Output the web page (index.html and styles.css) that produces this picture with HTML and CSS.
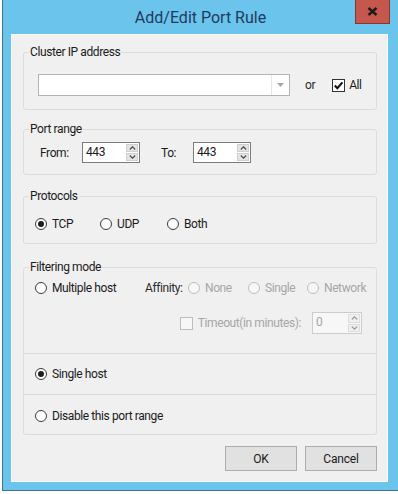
FILE: index.html
```html
<!DOCTYPE html>
<html lang="en">
<head>
<meta charset="utf-8">
<title>Add/Edit Port Rule</title>
<link rel="stylesheet" href="styles.css">
</head>
<body>
<div class="window">
  <div class="titlebar">
    <h1 class="title">Add/Edit Port Rule</h1>
    <button class="close" aria-label="Close">
      <svg width="11" height="9" viewBox="0 0 11 9"><path d="M1.5 1 L9.5 8 M9.5 1 L1.5 8" stroke="#1c1c1c" stroke-width="2.4" fill="none"/></svg>
    </button>
  </div>
  <div class="client">
    <fieldset class="group">
      <legend>Cluster IP address</legend>
      <div class="gbody cluster">
        <div class="combo">
          <span class="combo-btn"><svg width="7" height="4" viewBox="0 0 7 4"><path d="M0 0H7L3.5 4Z" fill="#a9a9a9"/></svg></span>
        </div>
        <span class="or">or</span>
        <label class="check">
          <span class="box"><svg width="11" height="11" viewBox="0 0 11 11"><path d="M1.8 5.6 L4.3 8.2 L9.4 2.4" stroke="#111" stroke-width="2.1" fill="none"/></svg></span>
          All
        </label>
      </div>
    </fieldset>

    <fieldset class="group">
      <legend>Port range</legend>
      <div class="gbody ports">
        <span class="plabel from">From:</span>
        <div class="spin">
          <span class="spin-val">443</span>
          <span class="spin-btns">
            <span class="sbtn"><svg width="7" height="4" viewBox="0 0 7 4"><path d="M0.8 3.5 L3.5 0.8 L6.2 3.5" stroke="#4a4a4a" stroke-width="1.1" fill="none"/></svg></span>
            <span class="sbtn"><svg width="7" height="4" viewBox="0 0 7 4"><path d="M0.8 0.5 L3.5 3.2 L6.2 0.5" stroke="#4a4a4a" stroke-width="1.1" fill="none"/></svg></span>
          </span>
        </div>
        <span class="plabel to">To:</span>
        <div class="spin">
          <span class="spin-val">443</span>
          <span class="spin-btns">
            <span class="sbtn"><svg width="7" height="4" viewBox="0 0 7 4"><path d="M0.8 3.5 L3.5 0.8 L6.2 3.5" stroke="#4a4a4a" stroke-width="1.1" fill="none"/></svg></span>
            <span class="sbtn"><svg width="7" height="4" viewBox="0 0 7 4"><path d="M0.8 0.5 L3.5 3.2 L6.2 0.5" stroke="#4a4a4a" stroke-width="1.1" fill="none"/></svg></span>
          </span>
        </div>
      </div>
    </fieldset>

    <fieldset class="group proto-group">
      <legend>Protocols</legend>
      <div class="gbody protocols">
        <label class="radio on"><span class="dot"></span>TCP</label>
        <label class="radio"><span class="dot"></span>UDP</label>
        <label class="radio"><span class="dot"></span>Both</label>
      </div>
    </fieldset>

    <div class="filter-block">
      <fieldset class="group filter">
        <legend>Filtering mode</legend>
        <div class="gbody filtering">
          <div class="frow">
            <label class="radio"><span class="dot"></span>Multiple host</label>
            <span class="affinity">Affinity:</span>
            <label class="radio dis"><span class="dot"></span>None</label>
            <label class="radio dis"><span class="dot"></span>Single</label>
            <label class="radio dis"><span class="dot"></span>Network</label>
          </div>
          <div class="trow">
            <label class="check dis"><span class="box"></span>Timeout(in minutes):</label>
            <div class="spin small dis">
              <span class="spin-val">0</span>
              <span class="spin-btns">
                <span class="sbtn"><svg width="7" height="4" viewBox="0 0 7 4"><path d="M0.8 3.5 L3.5 0.8 L6.2 3.5" stroke="#9a9a9a" stroke-width="1.1" fill="none"/></svg></span>
                <span class="sbtn"><svg width="7" height="4" viewBox="0 0 7 4"><path d="M0.8 0.5 L3.5 3.2 L6.2 0.5" stroke="#9a9a9a" stroke-width="1.1" fill="none"/></svg></span>
              </span>
            </div>
          </div>
        </div>
      </fieldset>
      <div class="subbox single">
        <label class="radio on"><span class="dot"></span>Single host</label>
      </div>
      <div class="subbox last">
        <label class="radio"><span class="dot"></span>Disable this port range</label>
      </div>
    </div>

    <div class="buttons">
      <button class="btn">OK</button>
      <button class="btn">Cancel</button>
    </div>
  </div>
</div>
</body>
</html>
```

FILE: styles.css
```css
* { box-sizing: border-box; }

body {
  margin: 0;
  background: #ffffff;
  font-family: Roboto, "Liberation Sans", Arial, sans-serif;
  font-size: 12px;
  letter-spacing: -0.4px;
  color: #1b1b1b;
}

.window {
  margin-left: 2px;
  width: 396px;
  height: 491px;
  background: #6bc4ec;
  border-left: 1px solid #3d7594;
  border-bottom: 1px solid #3d7594;
  display: flex;
  flex-direction: column;
}

.titlebar {
  height: 34px;
  display: grid;
  grid-template-columns: 1fr auto 1fr;
  align-items: start;
}

.title {
  grid-column: 2;
  margin: 0;
  font-size: 16px;
  font-weight: normal;
  letter-spacing: 0;
  line-height: 35px;
  color: #1e3b60;
}

.close {
  grid-column: 3;
  justify-self: end;
  margin: 0 8px 0 0;
  width: 35px;
  height: 24px;
  padding: 0;
  background: #c6574d;
  border: 1px solid #7c3a33;
  border-top: none;
  display: grid;
  place-items: center;
}

.client {
  margin: 0 10px 0 8px;
  height: 448px;
  background: #f0f0f0;
  border: 1px solid #fafafa;
  padding: 10px 10px 0 11px;
  display: flex;
  flex-direction: column;
}

.group {
  margin: 0;
  min-width: 0;
  border: 1px solid #dcdcdc;
  border-radius: 3px;
  padding: 0 0 0 5px;
}

.group + .group { margin-top: 12px; }
.group.proto-group { margin-top: 14px; }
.group + .filter-block { margin-top: 16px; }

.group legend {
  padding: 0 1px;
  line-height: 14px;
  font-size: 12px;
}

.gbody { display: flex; align-items: center; }

/* Cluster IP */
.cluster { padding: 15px 0 13px 9px; }

.combo {
  width: 252px;
  height: 22px;
  border: 1px solid #b3b3b3;
  background: #ffffff;
  display: flex;
  justify-content: flex-end;
}

.combo-btn {
  width: 18px;
  border-left: 1px solid #e6e6e6;
  display: grid;
  place-items: center;
}

.or { margin-left: 15px; color: #2a2a2a; }

.check {
  display: inline-flex;
  align-items: center;
  gap: 4px;
}

.cluster .check { margin-left: 17px; }

.box {
  width: 13px;
  height: 13px;
  border: 1px solid #333333;
  background: #ffffff;
  display: grid;
  place-items: center;
}

.check.dis { color: #a6a6a6; gap: 5px; }
.check.dis .box { border-color: #bdbdbd; background: #f7f7f7; }

/* Port range */
.ports { padding: 6px 0 11px 11px; }

.plabel { display: inline-block; }
.from { width: 42px; }
.to { width: 32px; margin-left: 21px; }

.spin {
  width: 58px;
  height: 21px;
  border: 1px solid #7c7c7c;
  background: #ffffff;
  display: flex;
}

.spin-val {
  flex: 1;
  padding-left: 3px;
  line-height: 19px;
}

.spin-btns {
  width: 13px;
  display: flex;
  flex-direction: column;
  padding: 1px 1px 1px 0;
  gap: 1px;
}

.sbtn {
  flex: 1;
  background: #e4e4e4;
  border: 1px solid #cfcfcf;
  display: grid;
  place-items: center;
}

.spin.small { width: 50px; height: 22px; }
.spin.dis { border-color: #cccccc; color: #a6a6a6; background: #f7f7f7; }
.spin.dis .sbtn { background: #f0f0f0; border-color: #dddddd; }

/* Radios */
.radio {
  display: inline-flex;
  align-items: center;
  gap: 5px;
  line-height: 16px;
}

.dot {
  width: 12px;
  height: 12px;
  border-radius: 50%;
  border: 1px solid #3a3a3a;
  background: #ffffff;
  display: grid;
  place-items: center;
}

.radio.on .dot::after {
  content: "";
  width: 6px;
  height: 6px;
  border-radius: 50%;
  background: #1e1e1e;
}

.radio.dis { color: #a6a6a6; }
.radio.dis .dot { border-color: #bdbdbd; background: #f7f7f7; }

.protocols {
  display: grid;
  grid-template-columns: 65px 67px auto;
  padding: 13px 0 11px 6px;
}

/* Filtering */
.filter-block { display: flex; flex-direction: column; }

.filter { border-radius: 3px 3px 0 0; }

.filtering {
  flex-direction: column;
  align-items: stretch;
  gap: 16px;
  padding: 6px 14px 19px 6px;
}

.frow {
  display: grid;
  grid-template-columns: 110px 43px 60px 59px auto;
  align-items: center;
}

.affinity { color: #2a2a2a; }

.trow {
  display: flex;
  justify-content: flex-end;
  align-items: center;
  gap: 11px;
}

.subbox {
  height: 41px;
  border: 1px solid #dcdcdc;
  border-top: none;
  display: flex;
  align-items: center;
  padding-left: 11px;
}

.subbox.last { height: 40px; padding-top: 2px; border-radius: 0 0 3px 3px; }

/* Buttons */
.buttons {
  margin-top: 11px;
  display: flex;
  justify-content: flex-end;
  gap: 8px;
}

.btn {
  width: 72px;
  height: 25px;
  background: #e1e1e1;
  border: 1px solid #adadad;
  font-family: inherit;
  font-size: 12px;
  letter-spacing: -0.2px;
  color: #1b1b1b;
  padding: 0;
}
```
